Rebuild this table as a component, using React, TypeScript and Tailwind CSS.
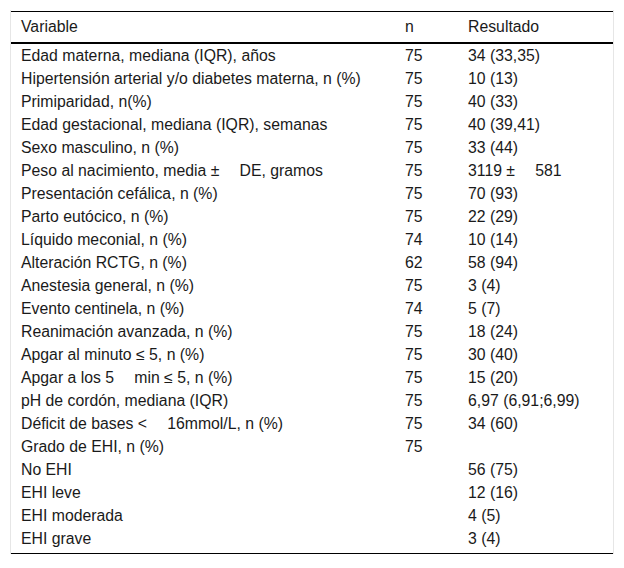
const rows: [string, string, string][] = [
  ["Edad materna, mediana (IQR), años", "75", "34 (33,35)"],
  ["Hipertensión arterial y/o diabetes materna, n (%)", "75", "10 (13)"],
  ["Primiparidad, n(%)", "75", "40 (33)"],
  ["Edad gestacional, mediana (IQR), semanas", "75", "40 (39,41)"],
  ["Sexo masculino, n (%)", "75", "33 (44)"],
  ["Peso al nacimiento, media ± \u2003DE, gramos", "75", "3119 ± \u2003581"],
  ["Presentación cefálica, n (%)", "75", "70 (93)"],
  ["Parto eutócico, n (%)", "75", "22 (29)"],
  ["Líquido meconial, n (%)", "74", "10 (14)"],
  ["Alteración RCTG, n (%)", "62", "58 (94)"],
  ["Anestesia general, n (%)", "75", "3 (4)"],
  ["Evento centinela, n (%)", "74", "5 (7)"],
  ["Reanimación avanzada, n (%)", "75", "18 (24)"],
  ["Apgar al minuto ≤ 5, n (%)", "75", "30 (40)"],
  ["Apgar a los 5 \u2003min ≤ 5, n (%)", "75", "15 (20)"],
  ["pH de cordón, mediana (IQR)", "75", "6,97 (6,91;6,99)"],
  ["Déficit de bases < \u200316mmol/L, n (%)", "75", "34 (60)"],
  ["Grado de EHI, n (%)", "75", ""],
  ["No EHI", "", "56 (75)"],
  ["EHI leve", "", "12 (16)"],
  ["EHI moderada", "", "4 (5)"],
  ["EHI grave", "", "3 (4)"],
]

export default function App() {
  return (
    <div className="min-h-screen bg-white pt-[10px] px-[10px] text-[15.8px] text-[#1a1a1a] [font-family:'Liberation_Sans',Arial,sans-serif]">
      <div className="border-x border-[#e6e6e6] pt-px">
        <table className="w-full border-collapse border-t border-b border-black">
          <thead>
            <tr className="border-b-2 border-black">
              <th className="h-[31px] pl-[10px] text-left font-normal">Variable</th>
              <th className="w-[63px] pl-[10px] text-left font-normal">n</th>
              <th className="w-[155px] pl-[10px] text-left font-normal">Resultado</th>
            </tr>
          </thead>
          <tbody>
            {rows.map(([label, n, res], i) => {
              const last = i === rows.length - 1
              return (
                <tr key={i} className={last ? "h-[27px] align-top" : "h-[23px]"}>
                  <td className="pl-[10px] leading-[23px] whitespace-pre">{label}</td>
                  <td className="pl-[10px] leading-[23px]">{n}</td>
                  <td className="pl-[10px] leading-[23px] whitespace-pre">{res}</td>
                </tr>
              )
            })}
          </tbody>
        </table>
      </div>
    </div>
  )
}
